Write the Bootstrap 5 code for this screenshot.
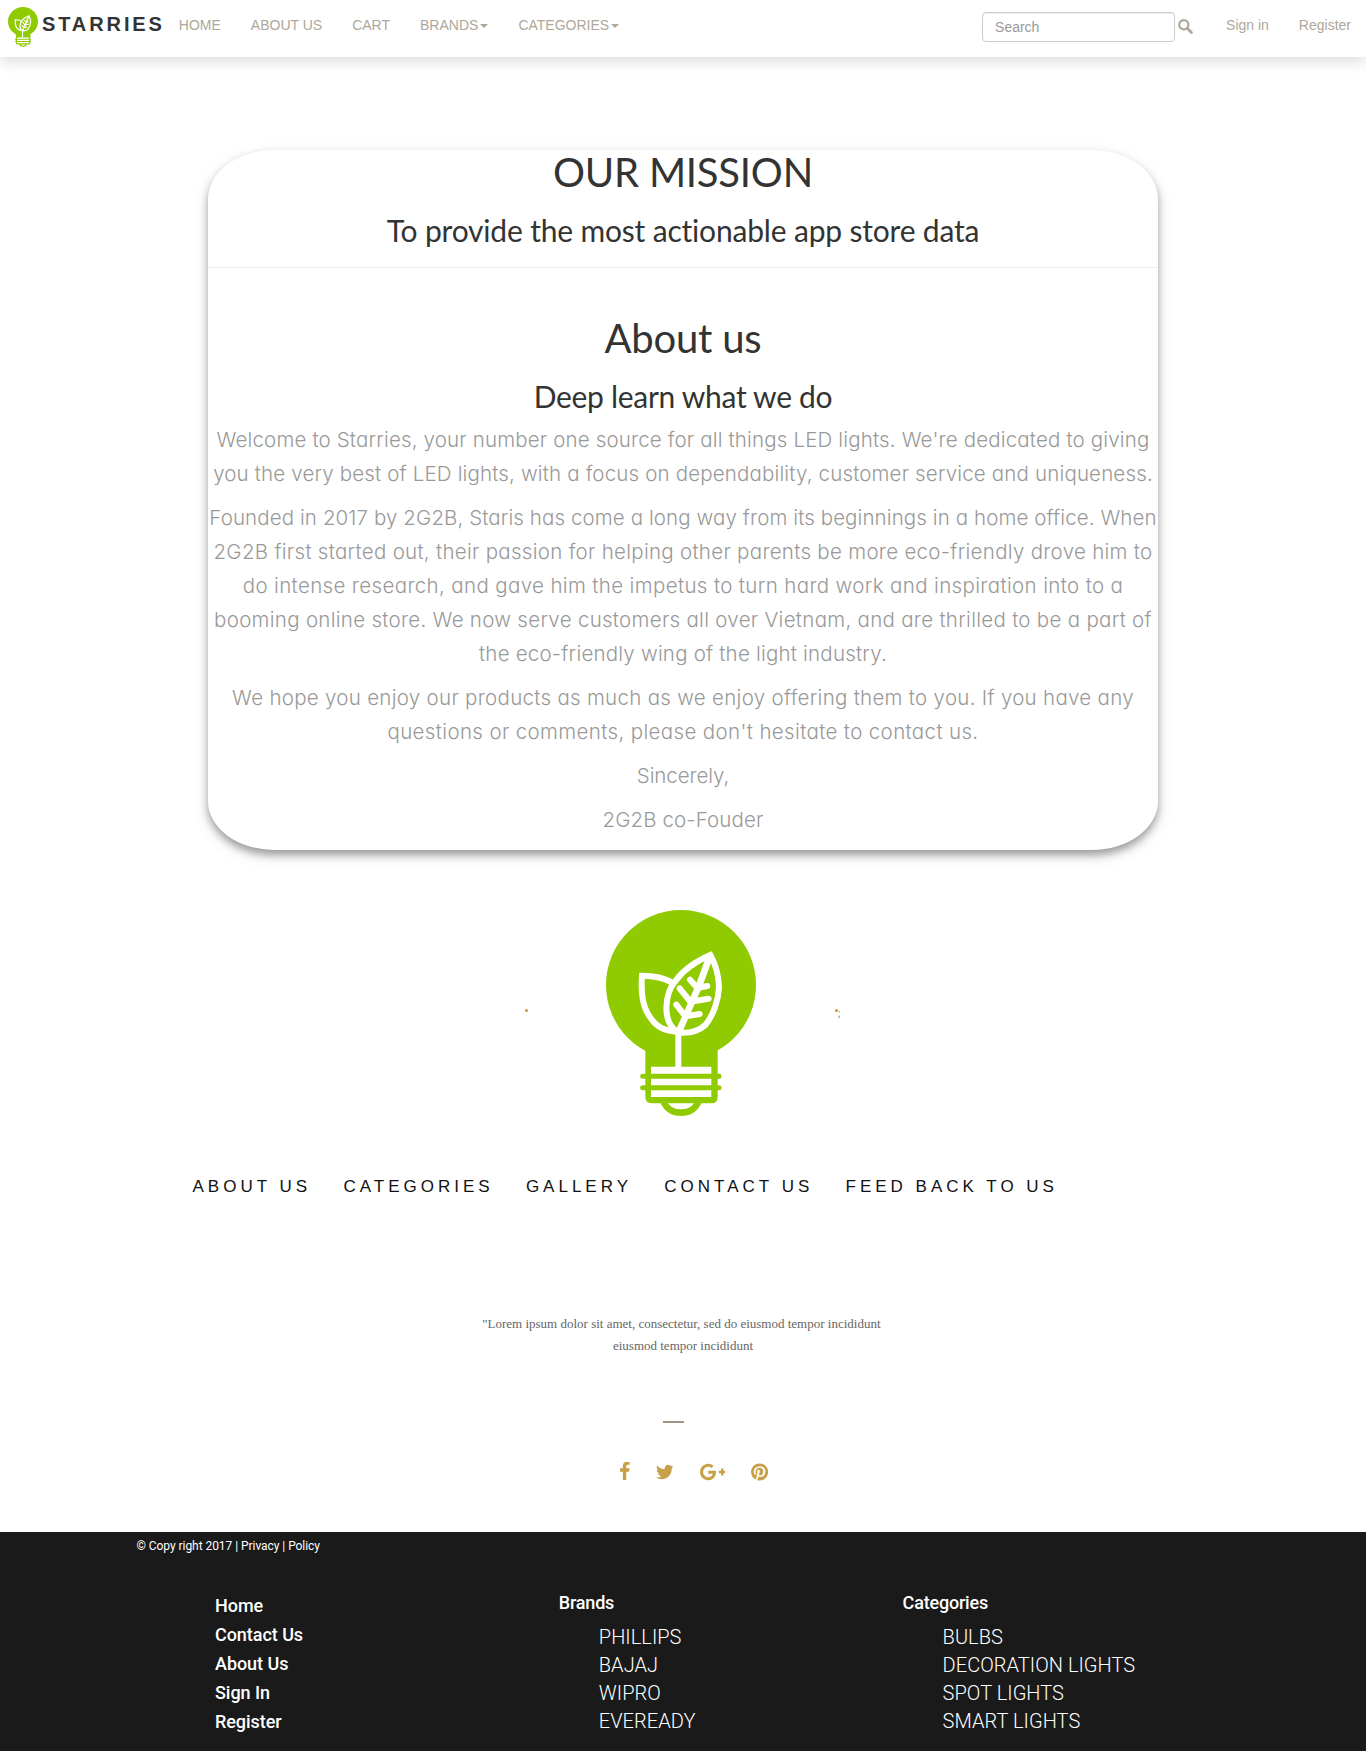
<!DOCTYPE html>
<html lang="en">
<head>
<meta charset="utf-8">
<meta name="viewport" content="width=device-width, initial-scale=1">
<title>Starries - About us</title>
<link href="https://cdn.jsdelivr.net/npm/bootstrap@5.3.0/dist/css/bootstrap.min.css" rel="stylesheet">
<style>
body{font-family:"Liberation Sans",Arial,sans-serif;font-size:14px;color:#333;background:#fff}
a{text-decoration:none}

/* top bar */
.topbar{height:57px;background:#fff;box-shadow:0 4px 14px rgba(0,0,0,.15);padding:0 15px 0 8px}
.topbar .navbar-brand{padding:7px 0 0;margin:0 -1px 0 0}
.brand-bulb{width:30px;height:40px;display:block}
.brand-name{font-size:20px;font-weight:700;letter-spacing:2.9px;color:#333;line-height:24px;margin:5px 0 0 4px}
.topbar .nav-link{color:#aea79a;font-size:14px;line-height:20px;padding:15px 15px 0}
.topbar .nav-link.signup{padding-right:0}
.caret{display:inline-block;border-top:4px solid;border-left:4px solid transparent;border-right:4px solid transparent;margin-left:2px;vertical-align:middle}
.search-box{width:193px;height:30px;border:1px solid #ccc;border-radius:4px;font-size:14px;padding:0 12px;color:#555;box-shadow:inset 0 1px 1px rgba(0,0,0,.075);margin-top:12px}
.search-box::placeholder{color:#999;opacity:1}
.search-icon{width:15px;height:15px;margin:19px 18px 0 3px}

/* mission card */
.mission{width:950px;height:700px;margin:93px auto 0;border-radius:7%;box-shadow:0 5px 8px rgba(0,0,0,.36),0 6px 20px rgba(0,0,0,.07);background:#fff}
.mission h1,.mission h2{font-family:Lato,sans-serif;font-weight:400;color:#333;margin:0;font-variant-ligatures:none}
.mission h1{font-size:40px;line-height:44px;letter-spacing:-.2px}
.mission h2{font-size:30px;line-height:33px;margin-top:20px;letter-spacing:-.18px}
.mission h2.deep{letter-spacing:-.3px}
.mission hr{border:0;border-top:1px solid #eee;opacity:1;margin:20px 0 48px}
.copy{padding-top:10px}
.copy p{font-family:Inter,sans-serif;font-feature-settings:"cv11";font-weight:300;font-size:20.5px;line-height:34px;color:#999;margin:0 0 10px;white-space:nowrap}
.copy span{display:block}
.fit-a{letter-spacing:-.08px}
.fit-b{letter-spacing:.1px}
.fit-c{letter-spacing:.16px}
.fit-d{letter-spacing:.21px}
.fit-e{letter-spacing:.29px}
.fit-f{letter-spacing:.36px}

/* emblem and links */
.emblem{margin-top:60px}
.big-bulb{width:150px;height:206px;margin:0 78.5px}
.pin-dot{width:3px;height:3px;border-radius:50%;background:#c8962e;margin-top:-5px}
.semi{font:12px/12px "Liberation Serif",serif;color:#999;width:4px;margin-top:-1px}
.site-links{margin:61px 0 0 192.5px;gap:32.3px}
.site-links a{color:#111;font-size:17px;line-height:20px;letter-spacing:4px;white-space:nowrap}
.quote{font-family:"Liberation Serif",serif;font-size:13px;line-height:22px;color:#666;margin:116px 0 0}
.dash{width:21px;height:2px;background:#a09284;margin:64px 0 0 663px}
.social{margin:39px 0 0 620px;height:20px;gap:26.2px}
.social svg{height:20px;fill:#c8a048}

/* footer */
.foot{background:#1a1a1a;color:#fff;font-family:Roboto,sans-serif;height:219px;margin-top:50px;padding-top:6px;overflow:hidden}
.legal{font-size:12px;line-height:16px;margin:0 0 0 136.5px;letter-spacing:-.05px}
.foot-cols{padding-left:215px;margin-top:38px}
.foot-col{width:343.8px}
.foot a{color:#fff;display:block}
.foot-menu{margin-top:-1px}
.foot-menu a{font-size:18px;line-height:29px;font-weight:500;letter-spacing:-.05px}
.foot-title{font-size:18px;line-height:22px;font-weight:500;margin:0 0 9px;letter-spacing:-.2px}
.foot-list a{font-size:20px;line-height:28px;font-weight:300;padding-left:40px;letter-spacing:.04px}
</style>
</head>
<body>
<svg class="d-none" xmlns="http://www.w3.org/2000/svg">
  <symbol id="bulb" viewBox="288 60 450 618" preserveAspectRatio="none">
    <g fill="#90ca00">
      <circle cx="513" cy="285" r="225"/>
      <path d="M406 440H623V620Q623 640 603 640H574Q556 678 513 678Q470 678 452 640H428Q406 640 406 620Z"/>
    </g>
    <path fill="#fff" d="M423 530H604V621H423ZM474 640H552Q540 658 513 658Q486 658 474 640Z"/>
    <path fill="none" stroke="#90ca00" stroke-width="15" stroke-linecap="round" d="M398 559H627M398 593H627"/>
    <g fill="none" stroke="#fff" stroke-width="18" stroke-linejoin="miter">
      <path d="M505 534V425"/>
      <path d="M506 428C452 398 465 308 497 272C523 235 560 213 601 195C618 225 626 254 627 292C625 332 610 376 586 405C564 425 540 431 506 428Z"/>
      <path d="M487 278C461 262 430 257 396 257C392 318 399 354 424 387C444 415 467 423 503 425"/>
      <path d="M601 195L568 285L507 424" stroke-width="20"/>
      <path stroke-linecap="round" d="M540 269L562 294L592 288M509 295L541 335L596 326M499 344L526 379L569 372"/>
    </g>
  </symbol>
</svg>

<nav class="topbar d-flex align-items-start">
  <a class="navbar-brand d-flex" href="#">
    <svg class="brand-bulb"><use href="#bulb"/></svg>
    <span class="brand-name">STARRIES</span>
  </a>
  <div class="d-flex">
    <a class="nav-link" href="#">HOME</a>
    <a class="nav-link" href="#">ABOUT US</a>
    <a class="nav-link" href="#">CART</a>
    <a class="nav-link" href="#">BRANDS<span class="caret"></span></a>
    <a class="nav-link" href="#">CATEGORIES<span class="caret"></span></a>
  </div>
  <form class="d-flex ms-auto">
    <input class="search-box" type="text" placeholder="Search">
    <svg class="search-icon" viewBox="0 0 15 15"><circle cx="5.8" cy="5.8" r="4.6" fill="none" stroke="#aea79a" stroke-width="2.2"/><path d="M9.2 9.2L13.4 13.4" stroke="#aea79a" stroke-width="2.8" stroke-linecap="round"/></svg>
  </form>
  <a class="nav-link" href="#">Sign in</a>
  <a class="nav-link signup" href="#">Register</a>
</nav>

<main>
  <section class="mission text-center">
    <h1>OUR MISSION</h1>
    <h2>To provide the most actionable app store data</h2>
    <hr>
    <h1>About us</h1>
    <h2 class="deep">Deep learn what we do</h2>
    <div class="copy">
      <p><span class="fit-c">Welcome to Starries, your number one source for all things LED lights. We're dedicated to giving</span>
      <span class="fit-c">you the very best of LED lights, with a focus on dependability, customer service and uniqueness.</span></p>
      <p><span class="fit-b">Founded in 2017 by 2G2B, Staris has come a long way from its beginnings in a home office. When</span>
      <span class="fit-e">2G2B first started out, their passion for helping other parents be more eco-friendly drove him to</span>
      <span class="fit-f">do intense research, and gave him the impetus to turn hard work and inspiration into to a</span>
      <span class="fit-e">booming online store. We now serve customers all over Vietnam, and are thrilled to be a part of</span>
      <span class="fit-d">the eco-friendly wing of the light industry.</span></p>
      <p><span class="fit-e">We hope you enjoy our products as much as we enjoy offering them to you. If you have any</span>
      <span class="fit-f">questions or comments, please don't hesitate to contact us.</span></p>
      <p class="fit-a">Sincerely,</p>
      <p class="fit-b">2G2B co-Fouder</p>
    </div>
  </section>

  <section class="emblem d-flex justify-content-center align-items-center">
    <span class="pin-dot"></span>
    <svg class="big-bulb"><use href="#bulb"/></svg>
    <span class="pin-dot"></span>
    <span class="semi">;</span>
  </section>

  <nav class="site-links d-flex">
    <a href="#">ABOUT US</a><a href="#">CATEGORIES</a><a href="#">GALLERY</a><a href="#">CONTACT US</a><a href="#">FEED BACK TO US</a>
  </nav>

  <p class="quote text-center">"Lorem ipsum dolor sit amet, consectetur, sed do eiusmod tempor incididunt&nbsp;<br>eiusmod tempor incididunt</p>
  <div class="dash"></div>

  <div class="social d-flex">
    <svg viewBox="479 40 864 1792"><path d="M1343 12v264h-157q-86 0-116 36t-30 108v189h293l-39 296h-254v759h-306v-759h-255v-296h255v-218q0-186 104-288.5t277-102.5q147 0 228 12z"/></svg>
    <svg viewBox="108 0 1576 1792"><path d="M1684 408q-67 98-162 167 1 14 1 42 0 130-38 259.5t-115.5 248.5-184.5 210.5-258 146-323 54.5q-271 0-496-145 35 4 78 4 225 0 401-138-105-2-188-64.5t-114-159.5q33 5 61 5 43 0 85-11-112-23-185.5-111.5t-73.5-205.5v-4q68 38 146 41-66-44-105-115t-39-154q0-88 44-163 121 149 294.5 238.5t371.5 99.5q-8-38-8-74 0-134 94.5-228.5t228.5-94.5q140 0 236 102 109-21 205-78-37 115-142 178 93-10 186-50z"/></svg>
    <svg viewBox="0 0 2304 1792"><path d="M1437 913q0 208-87 370.5t-248 254-369 91.5q-149 0-285-58t-234-156-156-234-58-285 58-285 156-234 234-156 285-58q286 0 491 192l-199 191q-117-113-292-113-123 0-227.5 62t-165.5 168.5-61 232.5 61 232.5 165.5 168.5 227.5 62q83 0 152.5-23t114.5-57.5 78.5-78.5 49-83 21.5-74h-416v-252h692q12 63 12 122zm867-122v210h-209v209h-210v-209h-209v-210h209v-209h210v209h209z"/></svg>
    <svg viewBox="128 0 1536 1792"><path d="M1664 896q0 209-103 385.5t-279.5 279.5-385.5 103q-111 0-218-32 59-93 78-164 9-34 54-211 20 39 73 67.5t114 28.5q121 0 216-68.5t147-188.5 52-270q0-114-59.5-214t-172.5-163-255-63q-105 0-196 29t-154.5 77-109 110.5-67 129.5-21.5 134q0 104 40 183t117 111q30 12 38-20 2-7 8-31t8-30q6-23-11-43-51-61-51-151 0-151 104.5-259.5t273.5-108.5q151 0 235.5 82t84.5 213q0 170-68.5 289t-175.5 119q-61 0-98-43.5t-23-104.5q8-35 26.5-93.5t30-103 11.5-75.5q0-50-27-83t-77-33q-62 0-105 57t-43 142q0 73 25 122l-99 418q-17 70-13 177-206-91-333-281t-127-423q0-209 103-385.5t279.5-279.5 385.5-103 385.5 103 279.5 279.5 103 385.5z"/></svg>
  </div>
</main>

<footer class="foot">
  <p class="legal">© Copy right 2017 | Privacy | Policy</p>
  <div class="foot-cols d-flex">
    <div class="foot-col foot-menu">
      <a href="#">Home</a><a href="#">Contact Us</a><a href="#">About Us</a><a href="#">Sign In</a><a href="#">Register</a>
    </div>
    <div class="foot-col foot-list">
      <p class="foot-title">Brands</p>
      <a href="#">PHILLIPS</a><a href="#">BAJAJ</a><a href="#">WIPRO</a><a href="#">EVEREADY</a>
    </div>
    <div class="foot-col foot-list">
      <p class="foot-title">Categories</p>
      <a href="#">BULBS</a><a href="#">DECORATION LIGHTS</a><a href="#">SPOT LIGHTS</a><a href="#">SMART LIGHTS</a>
    </div>
  </div>
</footer>
<script src="https://cdn.jsdelivr.net/npm/bootstrap@5.3.0/dist/js/bootstrap.bundle.min.js"></script>
</body>
</html>
